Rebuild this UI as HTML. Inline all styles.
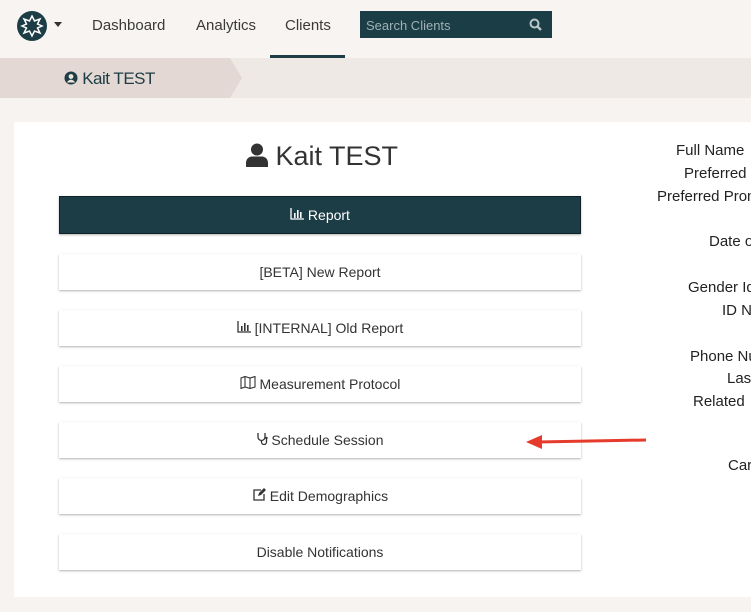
<!DOCTYPE html>
<html><head><meta charset="utf-8"><style>
*{box-sizing:border-box;margin:0;padding:0}
html,body{width:751px;height:612px;overflow:hidden}
body{background:#f6f3f0;font-family:"Liberation Sans",sans-serif;position:relative;color:#333}
.nav{position:absolute;left:0;top:0;width:751px;height:58px;background:#f7f4f1}
.nav a{position:absolute;top:17px;font-size:15px;color:#3a3a3a}
.ul{position:absolute;left:270px;top:55px;width:75px;height:3px;background:#1c3d45}
.search{position:absolute;left:360px;top:11px;width:192px;height:27px;background:#1b3d45;color:#9fb2b5;font-size:13px;padding:7px 0 0 6px}
.bc{position:absolute;left:0;top:58px;width:751px;height:40px;background:#efe9e6}
.bc1{position:absolute;left:0;top:58px;width:230px;height:40px;background:#e3d8d3}
.card{position:absolute;left:14px;top:122px;width:737px;height:475px;background:#fff}
.btn{position:absolute;left:59px;width:522px;height:36px;background:#fff;box-shadow:0 1px 2px rgba(0,0,0,.3);text-align:center;font-size:14px;line-height:36px;color:#333}
.clip{position:absolute;left:600px;top:0;width:151px;height:612px;overflow:hidden}
.r{position:absolute;font-size:15px;color:#222;white-space:nowrap}
</style></head><body>
<div class="nav">
<svg style="position:absolute;left:16px;top:10px" width="32" height="32" viewBox="0 0 32 32"><circle cx="16" cy="16" r="15" fill="#1c3d45"/><polygon points="16,6 18.5,11 24,9 21.5,14 26,16 21.5,18 24,23 18.5,21 16,26 13.5,21 8,23 10.5,18 6,16 10.5,14 8,9 13.5,11" fill="none" stroke="#fff" stroke-width="1.5"/></svg>
<svg style="position:absolute;left:54px;top:22px" width="8" height="5"><polygon points="0,0 8,0 4,5" fill="#333"/></svg>
<a style="left:92px">Dashboard</a><a style="left:196px">Analytics</a><a style="left:285px">Clients</a>
<div class="ul"></div>
<div class="search">Search Clients
<svg style="position:absolute;right:10px;top:7px" width="13" height="13" viewBox="0 0 13 13"><circle cx="5.5" cy="5.5" r="4" fill="none" stroke="#b9c7c9" stroke-width="2"/><line x1="8.5" y1="8.5" x2="12" y2="12" stroke="#b9c7c9" stroke-width="2.4"/></svg></div>
</div>
<div class="bc"></div><div class="bc1"></div>
<svg style="position:absolute;left:228px;top:58px" width="16" height="40"><polygon points="0,0 2,0 14,20 2,40 0,40" fill="#e3d8d3"/></svg>
<div style="position:absolute;left:64px;top:69px;font-size:17px;color:#1c3d45;letter-spacing:-0.5px">
<svg width="14" height="14" viewBox="0 0 14 14" style="vertical-align:-1px"><circle cx="7" cy="7" r="6.5" fill="#1c3d45"/><circle cx="7" cy="5.5" r="2.4" fill="#efe3de"/><path d="M3 11.5c1-2 2.5-2.7 4-2.7s3 .7 4 2.7" fill="#efe3de"/></svg> Kait TEST</div>
<div class="card"></div>
<div style="position:absolute;left:246px;top:141px;font-size:27px;color:#333">
<svg width="22" height="24" viewBox="0 0 22 24" style="vertical-align:-2px"><circle cx="11" cy="6.5" r="6" fill="#333"/><path d="M0 24v-4c0-4 3-6.5 6-6.5h10c3 0 6 2.5 6 6.5v4z" fill="#333"/></svg> Kait TEST</div>
<div class="btn" style="top:196px;height:38px;background:#1c3d45;color:#fff;border:1px solid #0e2228;line-height:36px">
<svg width="14" height="12" viewBox="0 0 14 12"><path d="M1 0v11h13" stroke="#fff" fill="none" stroke-width="1.3"/><rect x="4" y="5" width="1.6" height="5" fill="#fff"/><rect x="7" y="2" width="1.6" height="8" fill="#fff"/><rect x="10" y="4" width="1.6" height="6" fill="#fff"/></svg> Report</div>
<div class="btn" style="top:254px">[BETA] New Report</div>
<div class="btn" style="top:310px"><svg width="14" height="12" viewBox="0 0 14 12"><path d="M1 0v11h13" stroke="#333" fill="none" stroke-width="1.3"/><rect x="4" y="5" width="1.6" height="5" fill="#333"/><rect x="7" y="2" width="1.6" height="8" fill="#333"/><rect x="10" y="4" width="1.6" height="6" fill="#333"/></svg> [INTERNAL] Old Report</div>
<div class="btn" style="top:366px"><svg width="16" height="13" viewBox="0 0 16 13"><path d="M1 2l4-1.5 5 1.5 5-1.5v10.5l-5 1.5-5-1.5-4 1.5z M5 .5v10.5 M10 2v10.5" stroke="#333" fill="none" stroke-width="1.1"/></svg> Measurement Protocol</div>
<div class="btn" style="top:422px"><svg width="11" height="13" viewBox="0 0 11 13"><path d="M1 1v4a3.5 3.5 0 0 0 7 0V1 M4.5 8.5v1.5a2.5 2.5 0 0 0 5 0V7" stroke="#333" fill="none" stroke-width="1.3"/><circle cx="9.5" cy="6" r="1.2" fill="#333"/></svg> Schedule Session</div>
<div class="btn" style="top:478px"><svg width="14" height="13" viewBox="0 0 14 13"><path d="M9 2H2v10h10V6" stroke="#333" fill="none" stroke-width="1.3"/><path d="M6 8l1-3 5-5 2 2-5 5z" fill="#333"/></svg> Edit Demographics</div>
<div class="btn" style="top:534px">Disable Notifications</div>
<svg style="position:absolute;left:524px;top:432px" width="124" height="20"><line x1="14" y1="10" x2="122" y2="8" stroke="#e53b2c" stroke-width="3"/><polygon points="2,10 18,3 18,17" fill="#e53b2c"/></svg>
<div class="clip">
<div class="r" style="left:76px;top:142px">Full Name</div>
<div class="r" style="left:84px;top:165px">Preferred</div>
<div class="r" style="left:57px;top:188px">Preferred Pronouns</div>
<div class="r" style="left:109px;top:233px">Date of</div>
<div class="r" style="left:88px;top:279px">Gender Identity</div>
<div class="r" style="left:122px;top:302px">ID Number</div>
<div class="r" style="left:90px;top:348px">Phone Number</div>
<div class="r" style="left:127px;top:370px">Last</div>
<div class="r" style="left:93px;top:393px">Related</div>
<div class="r" style="left:128px;top:457px">Care</div>
</div>
</body></html>
